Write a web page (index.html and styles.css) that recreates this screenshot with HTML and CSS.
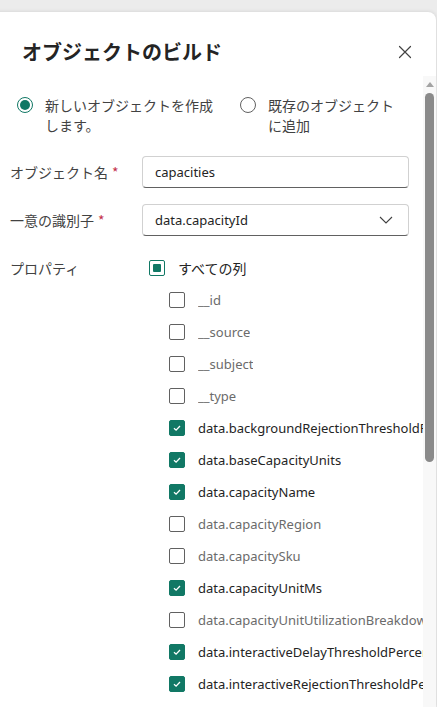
FILE: index.html
```html
<!DOCTYPE html>
<html lang="ja">
<head>
<meta charset="utf-8">
<link rel="stylesheet" href="styles.css">
</head>
<body>
<div class="panel">
  <div class="header">
    <h1 class="title">オブジェクトのビルド</h1>
    <svg class="close" width="20" height="20" viewBox="0 0 20 20"><path d="M4.5 4.5 L15.5 15.5 M15.5 4.5 L4.5 15.5" stroke="#424242" stroke-width="1.2" fill="none" stroke-linecap="round"/></svg>
  </div>
  <div class="body">
    <div class="content">
      <div class="radios">
        <div class="radio radio-1">
          <span class="circle checked"></span>
          <span class="rlabel">新しいオブジェクトを作成します。</span>
        </div>
        <div class="radio radio-2">
          <span class="circle"></span>
          <span class="rlabel">既存のオブジェクトに追加</span>
        </div>
      </div>
      <div class="field">
        <div class="flabel">オブジェクト名<span class="req">*</span></div>
        <div class="input">capacities</div>
      </div>
      <div class="field">
        <div class="flabel">一意の識別子<span class="req">*</span></div>
        <div class="input select">data.capacityId
          <svg class="chev" width="14" height="8" viewBox="0 0 14 8"><path d="M1 1 L7 7 L13 1" stroke="#424242" stroke-width="1.1" fill="none"/></svg>
        </div>
      </div>
      <div class="props">
        <div class="flabel">プロパティ</div>
        <div class="list">
          <div class="row all"><span class="cb mixed"></span><span class="clabel on">すべての列</span></div>
          <div class="row child"><span class="cb"></span><span class="clabel">__id</span></div>
          <div class="row child"><span class="cb"></span><span class="clabel">__source</span></div>
          <div class="row child"><span class="cb"></span><span class="clabel">__subject</span></div>
          <div class="row child"><span class="cb"></span><span class="clabel">__type</span></div>
          <div class="row child"><span class="cb on"><svg width="10" height="10" viewBox="0 0 10 10"><path d="M2 5.2 L4.1 7.2 L8 3" stroke="#fff" stroke-width="1.3" fill="none"/></svg></span><span class="clabel on">data.backgroundRejectionThresholdPercentage</span></div>
          <div class="row child"><span class="cb on"><svg width="10" height="10" viewBox="0 0 10 10"><path d="M2 5.2 L4.1 7.2 L8 3" stroke="#fff" stroke-width="1.3" fill="none"/></svg></span><span class="clabel on">data.baseCapacityUnits</span></div>
          <div class="row child"><span class="cb on"><svg width="10" height="10" viewBox="0 0 10 10"><path d="M2 5.2 L4.1 7.2 L8 3" stroke="#fff" stroke-width="1.3" fill="none"/></svg></span><span class="clabel on">data.capacityName</span></div>
          <div class="row child"><span class="cb"></span><span class="clabel">data.capacityRegion</span></div>
          <div class="row child"><span class="cb"></span><span class="clabel">data.capacitySku</span></div>
          <div class="row child"><span class="cb on"><svg width="10" height="10" viewBox="0 0 10 10"><path d="M2 5.2 L4.1 7.2 L8 3" stroke="#fff" stroke-width="1.3" fill="none"/></svg></span><span class="clabel on">data.capacityUnitMs</span></div>
          <div class="row child"><span class="cb"></span><span class="clabel">data.capacityUnitUtilizationBreakdown</span></div>
          <div class="row child"><span class="cb on"><svg width="10" height="10" viewBox="0 0 10 10"><path d="M2 5.2 L4.1 7.2 L8 3" stroke="#fff" stroke-width="1.3" fill="none"/></svg></span><span class="clabel on">data.interactiveDelayThresholdPercentage</span></div>
          <div class="row child"><span class="cb on"><svg width="10" height="10" viewBox="0 0 10 10"><path d="M2 5.2 L4.1 7.2 L8 3" stroke="#fff" stroke-width="1.3" fill="none"/></svg></span><span class="clabel on">data.interactiveRejectionThresholdPercentage</span></div>
        </div>
      </div>
    </div>
    <div class="scrollbar">
      <span class="arrow"></span>
      <span class="thumb"></span>
    </div>
  </div>
</div>
</body>
</html>
```

FILE: styles.css
```css
* { box-sizing: border-box; }
html, body { margin: 0; padding: 0; }
body {
  width: 437px;
  height: 707px;
  overflow: hidden;
  background: #ececec;
  font-family: "Noto Sans", "Noto Sans CJK JP", sans-serif;
  font-size: 14px;
  color: #242424;
}
.panel {
  margin: 12px 1px 0 -8px;
  height: 695px;
  background: #fff;
  border-radius: 8px 8px 0 0;
  box-shadow: 0 0 4px rgba(0,0,0,0.12);
  display: flex;
  flex-direction: column;
  overflow: hidden;
}
.header {
  display: flex;
  align-items: center;
  justify-content: space-between;
  padding: 28px 21px 12px 30px;
}
.title {
  margin: 0;
  font-family: "Noto Sans CJK JP", sans-serif;
  font-size: 20px;
  font-weight: 700;
  line-height: 24px;
  color: #242424;
}
.close { display: block; }
.body {
  flex: 1;
  display: flex;
  min-height: 0;
}
.content {
  flex: 1;
  min-width: 0;
  overflow: hidden;
  padding: 19px 0 0 18px;
}
.radios {
  display: flex;
}
.radio {
  display: flex;
  align-items: flex-start;
  padding-left: 7px;
}
.radio-1 { width: 223px; }
.rlabel {
  font-family: "Noto Sans CJK JP", sans-serif;
  line-height: 20px;
  color: #424242;
  margin-left: 12px;
}
.radio-1 .rlabel { width: 176px; }
.radio-2 .rlabel { width: 136px; }
.circle {
  width: 16px;
  height: 16px;
  margin-top: 2px;
  border-radius: 50%;
  border: 1px solid #616161;
  flex: none;
  display: flex;
  align-items: center;
  justify-content: center;
}
.circle.checked { border-color: #117865; }
.circle.checked::after {
  content: "";
  width: 10px;
  height: 10px;
  border-radius: 50%;
  background: #117865;
}
.field {
  display: flex;
  align-items: center;
  margin-top: 21px;
}
.field + .field { margin-top: 16px; }
.flabel {
  width: 132px;
  flex: none;
  font-family: "Noto Sans CJK JP", sans-serif;
  color: #424242;
}
.req { color: #c4314b; margin-left: 4px; }
.input {
  width: 267px;
  height: 32px;
  border: 1px solid #d1d1d1;
  border-bottom-color: #616161;
  border-radius: 4px;
  padding: 0 12px;
  display: flex;
  align-items: center;
  justify-content: space-between;
  color: #242424;
  font-size: 13px;
}
.chev { margin-right: 3px; }
.props {
  display: flex;
  margin-top: 16px;
}
.props .flabel { height: 32px; line-height: 32px; }
.list { flex: 1; min-width: 0; }
.row {
  height: 32px;
  display: flex;
  align-items: center;
  white-space: nowrap;
}
.row.all { padding-left: 7px; }
.row.child { padding-left: 27px; }
.cb {
  width: 16px;
  height: 16px;
  flex: none;
  border: 1px solid #616161;
  border-radius: 2px;
  display: flex;
  align-items: center;
  justify-content: center;
}
.cb.on { background: #117865; border-color: #117865; }
.cb.mixed { border-color: #117865; }
.cb.mixed::after {
  content: "";
  width: 8px;
  height: 8px;
  border-radius: 1px;
  background: #117865;
}
.cb svg { display: block; }
.clabel {
  margin-left: 13px;
  color: #6b6b6b;
  overflow: hidden;
  font-size: 13px;
}
.row.all .clabel { margin-left: 13px; font-size: 14px; font-family: "Noto Sans CJK JP", sans-serif; }
.clabel.on { color: #242424; }
.scrollbar {
  width: 13px;
  flex: none;
  background: #f8f8f8;
  display: flex;
  flex-direction: column;
  align-items: center;
  padding-top: 6px;
}
.arrow {
  width: 0;
  height: 0;
  border-left: 4px solid transparent;
  border-right: 4px solid transparent;
  border-bottom: 5px solid #a3a3a3;
}
.thumb {
  margin-top: 6px;
  width: 9px;
  height: 369px;
  border-radius: 5px;
  background: #8a8a8a;
}
```
